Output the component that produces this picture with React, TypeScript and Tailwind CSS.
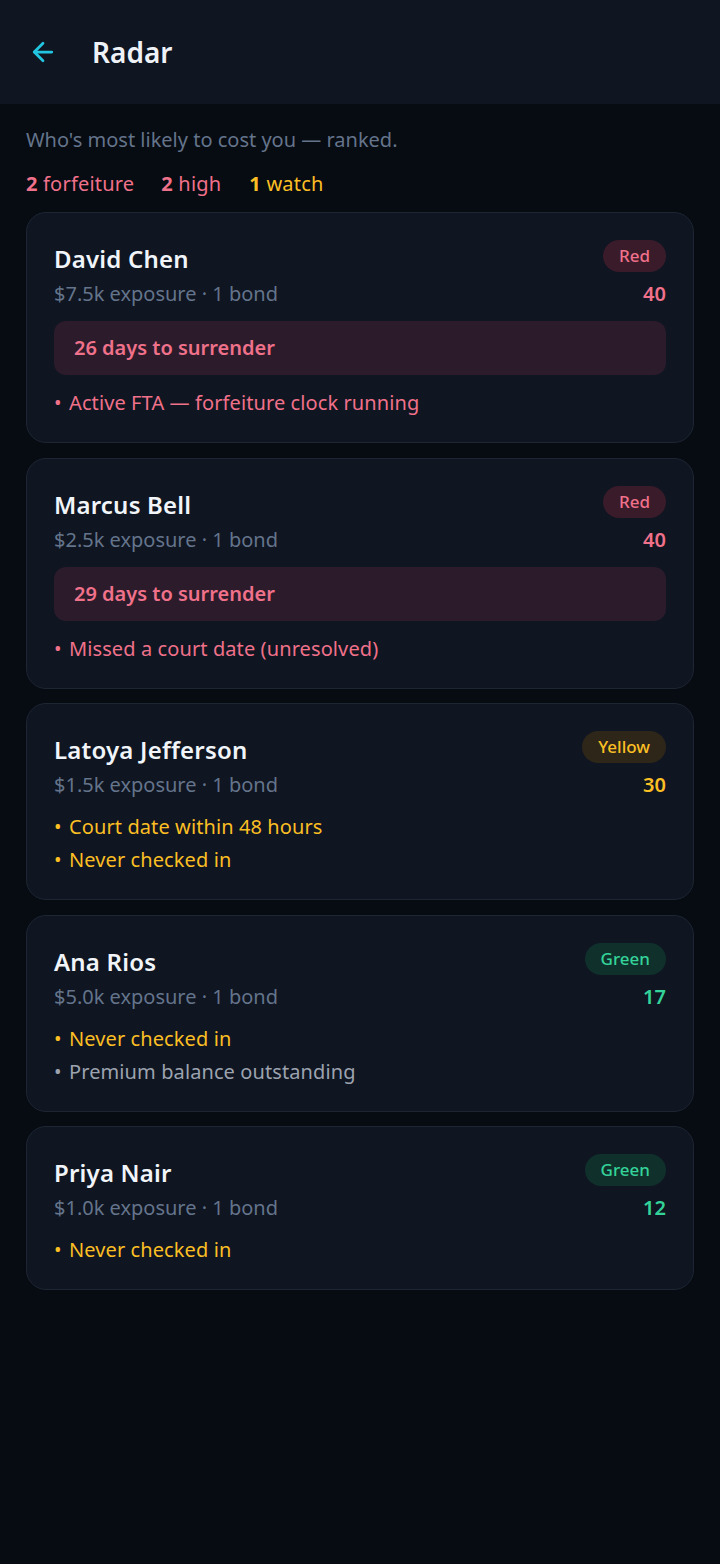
import React from "react";

type Tone = "red" | "yellow" | "green";

const toneBadge: Record<Tone, string> = {
  red: "bg-[#3a1b2a] text-[#f0718a]",
  yellow: "bg-[#2e2619] text-[#fbbf24]",
  green: "bg-[#10302c] text-[#34d399]",
};
const toneScore: Record<Tone, string> = {
  red: "text-[#f0718a]",
  yellow: "text-[#fbbf24]",
  green: "text-[#34d399]",
};
const bulletTone: Record<string, string> = {
  red: "text-[#f0718a]",
  yellow: "text-[#fbbf24]",
  gray: "text-[#9ca3af]",
};

type Person = {
  name: string;
  sub: string;
  tone: Tone;
  label: string;
  score: number;
  surrender?: string;
  bullets: { text: string; tone: "red" | "yellow" | "gray" }[];
};

const people: Person[] = [
  {
    name: "David Chen",
    sub: "$7.5k exposure · 1 bond",
    tone: "red",
    label: "Red",
    score: 40,
    surrender: "26 days to surrender",
    bullets: [{ text: "Active FTA — forfeiture clock running", tone: "red" }],
  },
  {
    name: "Marcus Bell",
    sub: "$2.5k exposure · 1 bond",
    tone: "red",
    label: "Red",
    score: 40,
    surrender: "29 days to surrender",
    bullets: [{ text: "Missed a court date (unresolved)", tone: "red" }],
  },
  {
    name: "Latoya Jefferson",
    sub: "$1.5k exposure · 1 bond",
    tone: "yellow",
    label: "Yellow",
    score: 30,
    bullets: [
      { text: "Court date within 48 hours", tone: "yellow" },
      { text: "Never checked in", tone: "yellow" },
    ],
  },
  {
    name: "Ana Rios",
    sub: "$5.0k exposure · 1 bond",
    tone: "green",
    label: "Green",
    score: 17,
    bullets: [
      { text: "Never checked in", tone: "yellow" },
      { text: "Premium balance outstanding", tone: "gray" },
    ],
  },
  {
    name: "Priya Nair",
    sub: "$1.0k exposure · 1 bond",
    tone: "green",
    label: "Green",
    score: 12,
    bullets: [{ text: "Never checked in", tone: "yellow" }],
  },
];

function Card({ p }: { p: Person }) {
  return (
    <div className="rounded-[20px] border border-[#1e2633] bg-[#0f1521] pt-[27px] pb-[23px] px-[27px]">
      <div className="flex justify-between">
        <div className="flex flex-col">
          <div className="text-[24px] leading-[38px] font-semibold tracking-[0.2px] text-[#f1f5f9]">{p.name}</div>
          <div className="text-[20px] leading-[32px] text-[#64748b]">{p.sub}</div>
        </div>
        <div className="flex flex-col items-end">
          <div
            className={`h-[32px] rounded-full px-[16px] flex items-center text-[17px] font-medium ${toneBadge[p.tone]}`}
          >
            {p.label}
          </div>
          <div className={`mt-[7px] text-[20px] leading-[30px] font-semibold ${toneScore[p.tone]}`}>{p.score}</div>
        </div>
      </div>
      {p.surrender && (
        <div className="mt-[11px] h-[54px] rounded-[12px] bg-[#2b1b2b] px-[20px] flex items-center text-[20px] font-semibold text-[#f0718a]">
          {p.surrender}
        </div>
      )}
      <div className={p.surrender ? "mt-[11px]" : "mt-[9px]"}>
        {p.bullets.map((b, i) => (
          <div key={i} className={`flex text-[20px] leading-[33px] ${bulletTone[b.tone]}`}>
            <span className="w-[15px]">•</span>
            <span className="tracking-[0.1px]">{b.text}</span>
          </div>
        ))}
      </div>
    </div>
  );
}

export default function App() {
  return (
    <div
      className="min-h-[1564px] w-full bg-[#070b12]"
      style={{ fontFamily: '"Noto Sans", "Open Sans", sans-serif' }}
    >
      <header className="h-[104px] bg-[#0f1521] flex items-center pl-[28px]">
        <svg width="30" height="30" viewBox="0 0 24 24" fill="none" stroke="#22c5e0" strokeWidth="2.2" strokeLinecap="round" strokeLinejoin="round">
          <path d="M19 12H5" />
          <path d="M12 19l-7-7 7-7" />
        </svg>
        <h1 className="ml-[34px] text-[28px] font-semibold text-[#eef2f7]">Radar</h1>
      </header>
      <div className="px-[26px]">
        <p className="mt-[20px] text-[20px] leading-[32px] text-[#64748b]">Who's most likely to cost you — ranked.</p>
        <div className="mt-[12px] flex text-[20px] leading-[32px] tracking-[0.2px]">
          <span className="text-[#f0718a]">
            <span className="font-bold">2</span> forfeiture
          </span>
          <span className="ml-[27px] text-[#f0718a]">
            <span className="font-bold">2</span> high
          </span>
          <span className="ml-[28px] text-[#fbbf24]">
            <span className="font-bold">1</span> watch
          </span>
        </div>
        <div className="mt-[12px] flex flex-col gap-[14.5px]">
          {people.map((p) => (
            <Card key={p.name} p={p} />
          ))}
        </div>
      </div>
    </div>
  );
}
